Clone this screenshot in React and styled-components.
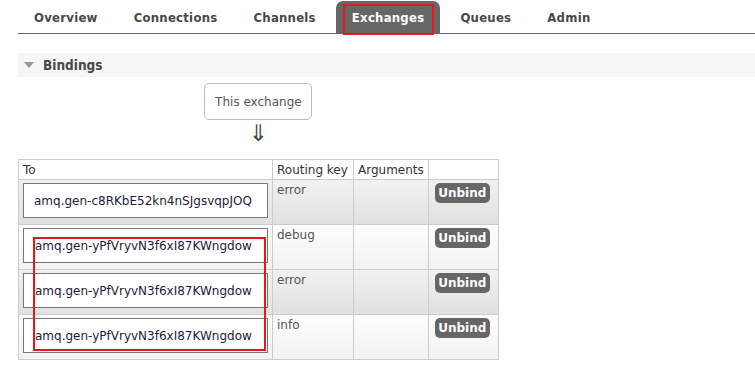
import React from 'react';
import styled, { createGlobalStyle, css } from 'styled-components';

const GlobalStyle = createGlobalStyle`
  html, body {
    margin: 0;
    padding: 0;
    background: #fff;
  }
  body {
    font-family: "DejaVu Sans", Verdana, sans-serif;
    font-size: 12px;
    color: #444;
  }
`;

const TABS = ['Overview', 'Connections', 'Channels', 'Exchanges', 'Queues', 'Admin'];

const BINDINGS = [
  { to: 'amq.gen-c8RKbE52kn4nSJgsvqpJOQ', key: 'error' },
  { to: 'amq.gen-yPfVryvN3f6xI87KWngdow', key: 'debug' },
  { to: 'amq.gen-yPfVryvN3f6xI87KWngdow', key: 'error' },
  { to: 'amq.gen-yPfVryvN3f6xI87KWngdow', key: 'info' },
];

const App = () => {
  return (
    <Page>
      <GlobalStyle />
      <Menu>
        {TABS.map((tab) => (
          <Tab key={tab} $active={tab === 'Exchanges'}>
            {tab}
            {tab === 'Exchanges' && <Highlight />}
          </Tab>
        ))}
      </Menu>

      <SectionBar>
        <Triangle />
        <SectionTitle>Bindings</SectionTitle>
      </SectionBar>

      <Diagram>
        <Source>This exchange</Source>
        <Arrow>⇓</Arrow>
        <TableWrap>
          <Table>
            <thead>
              <tr>
                <Th style={{ width: 245 }}>To</Th>
                <Th style={{ width: 72 }}>Routing key</Th>
                <Th style={{ width: 65 }}>Arguments</Th>
                <Th style={{ width: 61 }} />
              </tr>
            </thead>
            <tbody>
              {BINDINGS.map((b, i) => (
                <Row key={i} $alt={i % 2 === 1}>
                  <Td>
                    <QueueBox $tight={i > 0}>{b.to}</QueueBox>
                  </Td>
                  <Td>{b.key}</Td>
                  <Td />
                  <Td>
                    <UnbindButton>Unbind</UnbindButton>
                  </Td>
                </Row>
              ))}
            </tbody>
          </Table>
          <Annotation />
        </TableWrap>
      </Diagram>
    </Page>
  );
};

const Page = styled.div`
  padding: 1px 0 0 18px;
  width: 755px;
  height: 373px;
  box-sizing: border-box;
  overflow: hidden;
`;

const Menu = styled.ul`
  display: flex;
  gap: 4px;
  margin: 0;
  padding: 0;
  list-style: none;
  border-bottom: 1px solid #666;
  height: 32px;
`;

const Tab = styled.li`
  position: relative;
  display: flex;
  align-items: center;
  padding: 1px 16px 0;
  font-family: "DejaVu Sans Condensed", "DejaVu Sans", sans-serif;
  font-weight: bold;
  font-size: 13px;
  letter-spacing: 0.25px;
  color: #484848;
  border-radius: 7px 7px 0 0;

  ${(p) =>
    p.$active &&
    css`
      background: #666;
      color: #fff;
    `}
`;

const Highlight = styled.span`
  position: absolute;
  left: 7px;
  right: 6px;
  top: 3px;
  bottom: -2px;
  border: 2px solid #e8151f;
`;

const SectionBar = styled.div`
  display: flex;
  align-items: center;
  gap: 9px;
  margin-top: 19px;
  height: 24px;
  padding-left: 6px;
  background: #f6f6f6;
`;

const Triangle = styled.span`
  width: 0;
  height: 0;
  border-left: 5px solid transparent;
  border-right: 5px solid transparent;
  border-top: 6px solid #999;
`;

const SectionTitle = styled.span`
  font-family: "DejaVu Sans Condensed", "DejaVu Sans", sans-serif;
  font-weight: bold;
  font-size: 13.5px;
  color: #484848;
`;

const Diagram = styled.div`
  display: inline-flex;
  flex-direction: column;
  align-items: center;
  margin-top: 6px;
`;

const Source = styled.div`
  display: flex;
  align-items: center;
  justify-content: center;
  width: 106px;
  height: 35px;
  border: 1px solid #bbb;
  border-radius: 5px;
  font-size: 12px;
  color: #555;
`;

const Arrow = styled.div`
  height: 24px;
  margin-top: 1px;
  margin-bottom: 14px;
  font-family: "DejaVu Sans", sans-serif;
  font-size: 23px;
  line-height: 24px;
  color: #444;
`;

const TableWrap = styled.div`
  position: relative;
`;

const Table = styled.table`
  border-collapse: collapse;
  border: 1px solid #ccc;
  font-size: 12px;
`;

const Th = styled.th`
  height: 19px;
  padding: 0 4px;
  text-align: left;
  font-weight: normal;
  color: #333;
  background: #fff;
  border: 1px solid #ccc;
`;

const Row = styled.tr`
  height: 45px;
  background: ${(p) =>
    p.$alt
      ? 'linear-gradient(#fdfdfd, #f2f2f2)'
      : 'linear-gradient(#f1f1f1, #e1e1e1)'};
`;

const Td = styled.td`
  padding: 3px 4px 6px;
  vertical-align: top;
  border: 1px solid #ccc;
  color: #555;
`;

const QueueBox = styled.div`
  display: flex;
  align-items: center;
  box-sizing: border-box;
  height: 35px;
  padding-left: ${(p) => (p.$tight ? 11 : 10)}px;
  background: #fff;
  border: 1px solid #777;
  color: #1e1a3a;
  white-space: nowrap;
`;

const UnbindButton = styled.button`
  display: block;
  width: 55px;
  height: 20px;
  margin-left: 2px;
  padding: 0;
  border: none;
  border-radius: 5px;
  background: #666;
  color: #fff;
  font-family: "DejaVu Sans", Verdana, sans-serif;
  font-weight: bold;
  font-size: 12px;
`;

const Annotation = styled.span`
  position: absolute;
  left: 15px;
  top: 78px;
  width: 233px;
  height: 114px;
  box-sizing: border-box;
  border: 2px solid #e8151f;
  pointer-events: none;
`;

export default App;
